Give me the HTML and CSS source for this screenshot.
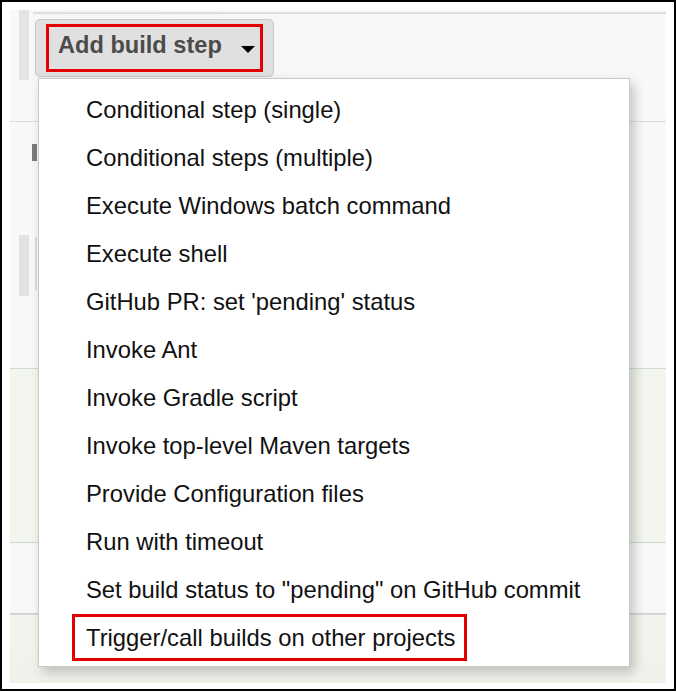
FILE: index.html
```html
<!DOCTYPE html>
<html lang="en">
<head>
    <meta charset="UTF-8">
    <meta name="viewport" content="width=device-width, initial-scale=1.0">
    <title>Add build step</title>
    <link rel="stylesheet" href="styles.css">
</head>
<body>

    <div class="frame">
        <div class="page">

            <div class="row row-top">
                <div class="gutter"></div>
                <div class="rail rail-top"></div>
                <div class="main">
                    <div class="step-box">
                        <div class="dropdown">
                            <div class="add-btn">
                                <div class="hl-box">
                                    <span class="btn-label">Add build step</span>
                                    <span class="caret"></span>
                                </div>
                            </div>

                            <ul class="menu">
                                <li>Conditional step (single)</li>
                                <li>Conditional steps (multiple)</li>
                                <li>Execute Windows batch command</li>
                                <li>Execute shell</li>
                                <li>GitHub PR: set 'pending' status</li>
                                <li>Invoke Ant</li>
                                <li>Invoke Gradle script</li>
                                <li>Invoke top-level Maven targets</li>
                                <li>Provide Configuration files</li>
                                <li>Run with timeout</li>
                                <li>Set build status to "pending" on GitHub commit</li>
                                <li class="picked"><span class="hl-item">Trigger/call builds on other projects</span></li>
                            </ul>
                        </div>
                    </div>
                </div>
            </div>

            <div class="row row-b">
                <div class="gutter"></div>
                <div class="rail rail-mid"></div>
                <div class="main col">
                    <div class="handle"></div>
                    <div class="thin-line"></div>
                </div>
            </div>

            <div class="row row-c"></div>
            <div class="row row-d"></div>
            <div class="row row-e"></div>

        </div>
    </div>

</body>
</html>
```

FILE: styles.css
```css
body {
    margin: 0;
    background-color: white;
    font-family: "Liberation Sans", Arial, Helvetica, sans-serif;
}
.frame {
    width: 676px;
    height: 691px;
    box-sizing: border-box;
    border: 2px solid black;
    padding: 8px;
    background-color: white;
}
.page {
    width: 656px;
    height: 673px;
    background-color: #f8f8f8;
    overflow: hidden;
}
.row {
    display: flex;
    box-sizing: border-box;
}
.gutter {
    width: 9px;
    flex-shrink: 0;
}
.rail {
    width: 10px;
    flex-shrink: 0;
}
.main {
    flex: 1;
}
.col {
    display: flex;
    flex-direction: column;
}

/* top row with the step box and the button */
.row-top {
    height: 112px;
    border-bottom: 1px solid #dddddd;
}
.rail-top {
    height: 70px;
    background-color: #e4e4e4;
}
.step-box {
    margin-top: 2px;
    margin-left: 4px;
    border-top: 2px solid #dedede;
    background: linear-gradient(to right, #f6f6f6, #f9f9f9);
    height: 98px;
}
.dropdown {
    position: relative;
    display: inline-block;
    margin-top: 5px;
    margin-left: 2px;
}
.add-btn {
    display: inline-flex;
    padding: 4px 10px;
    border: 1px solid #c8c8c8;
    border-radius: 5px;
    background-color: #e0e0e0;
}
.hl-box {
    display: flex;
    align-items: center;
    height: 48px;
    box-sizing: border-box;
    border: 3px solid #e30000;
    padding: 0 5px 5px 9px;
}
.btn-label {
    font-size: 23.6px;
    font-weight: bold;
    color: #4b4b4b;
    line-height: 1;
}
.caret {
    width: 0;
    height: 0;
    margin-left: 19px;
    margin-top: 7px;
    border-left: 7px solid transparent;
    border-right: 7px solid transparent;
    border-top: 7px solid black;
}

/* dropdown menu */
.menu {
    position: absolute;
    left: 3px;
    top: 59px;
    z-index: 5;
    width: 592px;
    box-sizing: border-box;
    margin: 0;
    padding: 7px 0 4px;
    list-style: none;
    background-color: white;
    border: 1px solid #c9c9c9;
    box-shadow: 4px 5px 11px rgba(0, 0, 0, 0.22);
}
.menu li {
    display: flex;
    align-items: center;
    height: 48px;
    padding-left: 47px;
    font-size: 23.8px;
    color: #111111;
    white-space: nowrap;
}
.menu li.picked {
    align-items: flex-start;
}
.hl-item {
    display: inline-flex;
    align-items: center;
    height: 47px;
    box-sizing: border-box;
    margin-left: -14px;
    padding: 0 9px 0 11px;
    border: 3px solid #e30000;
}

/* second row */
.row-b {
    height: 247px;
    border-bottom: 1px solid #cfdcd3;
}
.rail-mid {
    margin-top: 113px;
    height: 61px;
    background-color: #e2e2e2;
}
.handle {
    margin-top: 22px;
    margin-left: 3px;
    width: 5px;
    height: 17px;
    background-color: #7b7b7b;
}
.thin-line {
    margin-top: 76px;
    margin-left: 6px;
    width: 2px;
    height: 53px;
    background-color: #dcdcdc;
}

.row-c {
    height: 174px;
    background-color: #f2f6ef;
    border-bottom: 1px solid #cbdccf;
}
.row-d {
    height: 72px;
    background-color: #f8f8f8;
    border-bottom: 2px solid #d6d6d6;
}
.row-e {
    height: 69px;
    background: linear-gradient(to bottom, #f2f5ee, #eef2ea);
}
```
